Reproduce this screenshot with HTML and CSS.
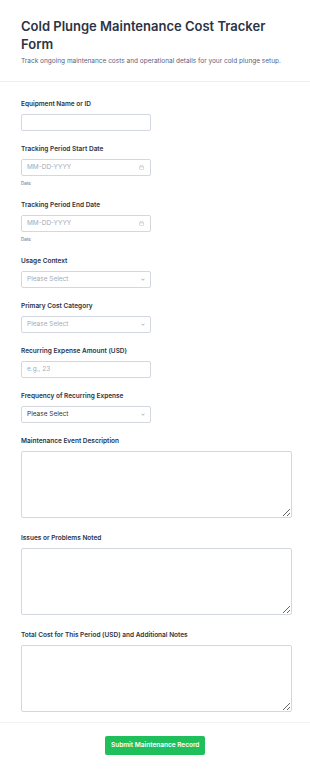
FILE: index.html
```html
<!DOCTYPE html>
<html>
<head>
    <title>Cold Plunge Maintenance Cost Tracker Form</title>
    <link rel="stylesheet" href="styles.css">
</head>
<body>
    <div class="header">
        <h1>Cold Plunge Maintenance Cost Tracker Form</h1>
        <p class="subtitle">Track ongoing maintenance costs and operational details for your cold plunge setup.</p>
    </div>
    <form class="form-body">
        <div class="field">
            <label>Equipment Name or ID</label>
            <input type="text" class="text-input">
        </div>
        <div class="field with-sub">
            <label>Tracking Period Start Date</label>
            <div class="date-box">
                <input type="text" placeholder="MM-DD-YYYY">
                <svg class="cal-icon" viewBox="0 0 10 10" width="5" height="5">
                    <rect x="1" y="1.8" width="8" height="7.4" rx="1" fill="none" stroke="#b8bdc9" stroke-width="1"/>
                    <path d="M1 4h8M3.2 0.5v2.4M6.8 0.5v2.4" stroke="#b8bdc9" stroke-width="1"/>
                </svg>
            </div>
            <div class="sublabel">Date</div>
        </div>
        <div class="field with-sub">
            <label>Tracking Period End Date</label>
            <div class="date-box">
                <input type="text" placeholder="MM-DD-YYYY">
                <svg class="cal-icon" viewBox="0 0 10 10" width="5" height="5">
                    <rect x="1" y="1.8" width="8" height="7.4" rx="1" fill="none" stroke="#b8bdc9" stroke-width="1"/>
                    <path d="M1 4h8M3.2 0.5v2.4M6.8 0.5v2.4" stroke="#b8bdc9" stroke-width="1"/>
                </svg>
            </div>
            <div class="sublabel">Date</div>
        </div>
        <div class="field">
            <label>Usage Context</label>
            <div class="select-box empty">
                <span>Please Select</span>
                <svg viewBox="0 0 8 5" width="4" height="3"><path d="M1 1l3 3 3-3" fill="none" stroke="#7b8394" stroke-width="1.3"/></svg>
            </div>
        </div>
        <div class="field">
            <label>Primary Cost Category</label>
            <div class="select-box empty">
                <span>Please Select</span>
                <svg viewBox="0 0 8 5" width="4" height="3"><path d="M1 1l3 3 3-3" fill="none" stroke="#7b8394" stroke-width="1.3"/></svg>
            </div>
        </div>
        <div class="field">
            <label>Recurring Expense Amount (USD)</label>
            <input type="text" class="text-input" placeholder="e.g., 23">
        </div>
        <div class="field">
            <label>Frequency of Recurring Expense</label>
            <div class="select-box">
                <span>Please Select</span>
                <svg viewBox="0 0 8 5" width="4" height="3"><path d="M1 1l3 3 3-3" fill="none" stroke="#7b8394" stroke-width="1.3"/></svg>
            </div>
        </div>
        <div class="field big">
            <label>Maintenance Event Description</label>
            <textarea></textarea>
        </div>
        <div class="field big">
            <label>Issues or Problems Noted</label>
            <textarea></textarea>
        </div>
        <div class="field big">
            <label>Total Cost for This Period (USD) and Additional Notes</label>
            <textarea></textarea>
        </div>
    </form>
    <div class="footer">
        <button type="button" class="submit-btn">Submit Maintenance Record</button>
    </div>
</body>
</html>
```

FILE: styles.css
```css
body {
    margin: 0;
    font-family: Inter, "Noto Sans", sans-serif;
    color: #2c3345;
    background: #fff;
}
.header {
    padding: 17px 21px 15px;
    border-bottom: 1px solid #ebedf1;
}
h1 {
    margin: 0;
    font-size: 13px;
    line-height: 18.3px;
    font-weight: 600;
    color: #2c3345;
}
.subtitle {
    margin: 3px 0 0;
    font-size: 6.5px;
    line-height: 9px;
    color: #57647e;
}
.form-body {
    padding: 17px 21px 10px;
    border-bottom: 1px solid #f1f2f4;
}
.field {
    margin-bottom: 13px;
}
.field.big {
    margin-bottom: 15px;
}
.field:last-child {
    margin-bottom: 0;
}
label {
    display: block;
    font-size: 6.5px;
    line-height: 10px;
    font-weight: 600;
    margin-bottom: 5px;
    color: #2c3345;
}
.text-input,
.date-box,
.select-box {
    box-sizing: border-box;
    width: 130px;
    height: 17px;
    border: 1px solid #d3d7df;
    border-radius: 2px;
    background: #fff;
}
.text-input {
    display: block;
    padding: 0 5px;
    font-family: inherit;
    font-size: 6.5px;
    color: #2c3345;
    outline: none;
}
input::placeholder {
    color: #a3aab8;
}
.date-box {
    display: flex;
    align-items: center;
    padding: 0 6px 0 5px;
}
.date-box input {
    flex: 1;
    min-width: 0;
    border: none;
    padding: 0;
    font-family: inherit;
    font-size: 6.5px;
    outline: none;
}
.sublabel {
    margin-top: 5px;
    margin-bottom: 3px;
    font-size: 4.5px;
    line-height: 6px;
    color: #57647e;
}
.select-box {
    display: flex;
    align-items: center;
    justify-content: space-between;
    padding: 0 5px;
    font-size: 6.5px;
    color: #2c3345;
}
.select-box.empty span {
    color: #a3aab8;
}
textarea {
    display: block;
    box-sizing: border-box;
    width: 271px;
    height: 67px;
    border: 1px solid #d3d7df;
    border-radius: 2px;
    resize: vertical;
    font-family: inherit;
    font-size: 7px;
    outline: none;
}
.footer {
    display: flex;
    justify-content: center;
    padding: 13px 0 17px;
}
.submit-btn {
    width: 100px;
    height: 19px;
    border: none;
    border-radius: 2px;
    background: #1fbf5c;
    color: #fff;
    font-family: inherit;
    font-size: 6.5px;
    font-weight: 600;
    white-space: nowrap;
    cursor: pointer;
}
```
